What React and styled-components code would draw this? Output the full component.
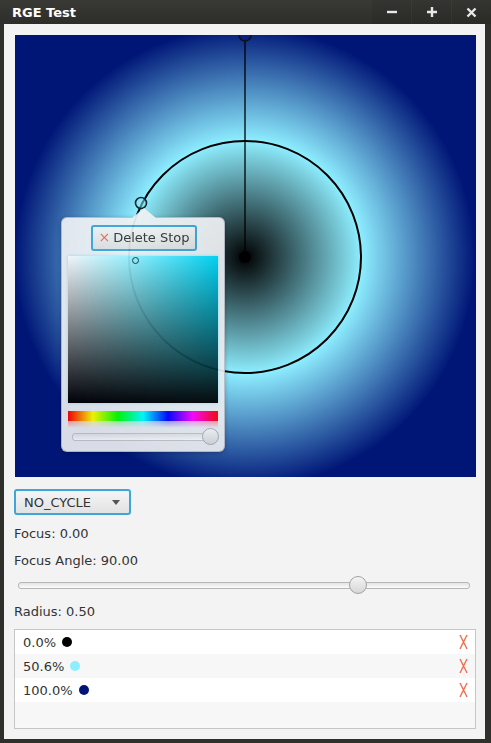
import React from "react";
import styled, { createGlobalStyle } from "styled-components";

const GlobalStyle = createGlobalStyle`
  html, body {
    margin: 0;
    padding: 0;
    background: #2f302c;
  }
  body {
    font-family: "DejaVu Sans", "Liberation Sans", sans-serif;
    font-size: 13px;
    color: #333;
  }
`;

const stops = [
  { pct: "0.0%", color: "#000000" },
  { pct: "50.6%", color: "#8eeeff" },
  { pct: "100.0%", color: "#001677" },
];

export default function App() {
  return (
    <>
      <GlobalStyle />
      <Window>
        <TitleBar>
          <Title>RGE Test</Title>
          <WinButtons>
            <WinButton>
              <svg width="12" height="12" viewBox="0 0 12 12">
                <path d="M1 6h10" stroke="#e8e8e8" strokeWidth="2.4" />
              </svg>
            </WinButton>
            <WinButton>
              <svg width="12" height="12" viewBox="0 0 12 12">
                <path d="M1 6h10M6 1v10" stroke="#e8e8e8" strokeWidth="2.4" />
              </svg>
            </WinButton>
            <WinButton>
              <svg width="11" height="11" viewBox="0 0 11 11">
                <path d="M1.5 1.5l8 8M9.5 1.5l-8 8" stroke="#e8e8e8" strokeWidth="2.4" />
              </svg>
            </WinButton>
          </WinButtons>
        </TitleBar>
        <Content>
          <Canvas>
            <Overlay width="461" height="442" viewBox="0 0 461 442">
              <circle cx="230" cy="222" r="116" fill="none" stroke="#000" strokeWidth="2" />
              <line x1="230" y1="222" x2="230" y2="0" stroke="#000" strokeWidth="1.3" />
              <circle cx="230" cy="0" r="6" fill="#0a2080" stroke="#111" strokeWidth="1.5" />
              <circle cx="230" cy="222" r="6" fill="#000" />
              <circle cx="126" cy="168" r="5.5" fill="rgba(140,230,245,0.55)" stroke="#16262c" strokeWidth="1.6" />
            </Overlay>
            <Popup>
              <Arrow />
              <DeleteButton>
                <Cross>×</Cross>Delete Stop
              </DeleteButton>
              <ColorSquare>
                <Picker />
              </ColorSquare>
              <HueBar />
              <HueReflection />
              <PopSlider>
                <PopTrack />
                <PopThumb />
              </PopSlider>
            </Popup>
          </Canvas>
          <Combo>
            <span>NO_CYCLE</span>
            <ComboArrow />
          </Combo>
          <Label $top={11}>Focus: 0.00</Label>
          <Label $top={11}>Focus Angle: 90.00</Label>
          <Slider>
            <Track />
            <Thumb />
          </Slider>
          <Label $top={10}>Radius: 0.50</Label>
          <StopList>
            {stops.map((s, i) => (
              <Row key={s.pct} $odd={i % 2 === 1}>
                <Pct>{s.pct}</Pct>
                <Dot $color={s.color} />
                <RemoveX width="9" height="16" viewBox="0 0 9 16">
                  <path
                    d="M1 1 Q4.5 8 8 15 M8 1 Q4.5 8 1 15"
                    fill="none"
                    stroke="#f26647"
                    strokeWidth="1.3"
                  />
                </RemoveX>
              </Row>
            ))}
            <Row $odd />
          </StopList>
        </Content>
      </Window>
    </>
  );
}

const Window = styled.div`
  width: 491px;
  height: 743px;
  display: flex;
  flex-direction: column;
  box-sizing: border-box;
  padding: 0 6px 4px 4px;
  background: #2f302c;
`;

const TitleBar = styled.div`
  height: 24px;
  margin: 0 -6px 0 -4px;
  display: flex;
  align-items: center;
  justify-content: space-between;
  background: linear-gradient(#393a35, #2d2e2a);
`;

const Title = styled.div`
  color: #fff;
  font-weight: bold;
  font-size: 13px;
  padding-left: 12px;
  padding-top: 1px;
`;

const WinButtons = styled.div`
  display: flex;
  height: 100%;
  background: rgba(0, 0, 0, 0.06);
`;

const WinButton = styled.div`
  width: 39px;
  height: 100%;
  display: flex;
  align-items: center;
  justify-content: center;
  & + & {
    border-left: 1px solid rgba(255, 255, 255, 0.03);
  }
`;

const Content = styled.div`
  flex: 1;
  background: #f3f3f3;
  display: flex;
  flex-direction: column;
  align-items: flex-start;
  padding: 11px 9px 0 10px;
`;

const Canvas = styled.div`
  position: relative;
  width: 461px;
  height: 442px;
  margin-left: 1px;
  background: radial-gradient(
    circle 230px at 230px 222px,
    #000000 0%,
    #8eeeff 50.6%,
    #001677 100%
  );
`;

const Overlay = styled.svg`
  position: absolute;
  left: 0;
  top: 0;
`;

const Popup = styled.div`
  position: absolute;
  left: 46px;
  top: 182px;
  width: 164px;
  height: 235px;
  box-sizing: border-box;
  padding: 7px;
  display: flex;
  flex-direction: column;
  align-items: center;
  border-radius: 6px;
  background: linear-gradient(#eff1f4, #e9ebef);
  border: 1px solid rgba(180, 186, 196, 0.9);
  box-shadow: 0 1px 4px rgba(0, 0, 0, 0.3);
  opacity: 0.93;
`;

const Arrow = styled.div`
  position: absolute;
  left: 70px;
  top: -10px;
  width: 0;
  height: 0;
  border-left: 12px solid transparent;
  border-right: 12px solid transparent;
  border-bottom: 10px solid #eff1f4;
`;

const DeleteButton = styled.div`
  width: 106px;
  height: 26px;
  box-sizing: border-box;
  margin-left: 2px;
  display: flex;
  align-items: center;
  justify-content: center;
  gap: 3px;
  border: 2px solid #3ea7d9;
  border-radius: 3px;
  background: linear-gradient(#f4f4f4, #e1e1e1);
  color: #333;
  font-size: 13px;
`;

const Cross = styled.span`
  color: #f06a50;
  font-size: 14px;
  line-height: 1;
  margin-top: -1px;
`;

const ColorSquare = styled.div`
  position: relative;
  margin-top: 5px;
  width: 150px;
  height: 150px;
  background: linear-gradient(to top, #000, rgba(0, 0, 0, 0)),
    linear-gradient(to right, #fff, hsl(188, 100%, 50%));
  box-shadow: 0 0 3px rgba(80, 220, 255, 0.6);
`;

const Picker = styled.div`
  position: absolute;
  left: 64px;
  top: 1px;
  width: 5px;
  height: 5px;
  border-radius: 50%;
  border: 1.5px solid #203038;
`;

const hue =
  "linear-gradient(to right, #ff0000, #ffff00 16.6%, #00ff00 33.3%, #00ffff 50%, #0000ff 66.6%, #ff00ff 83.3%, #ff0000)";

const HueBar = styled.div`
  margin-top: 8px;
  width: 150px;
  height: 10px;
  background: ${hue};
`;

const HueReflection = styled.div`
  width: 150px;
  height: 7px;
  background: ${hue};
  opacity: 0.35;
  -webkit-mask-image: linear-gradient(#000, transparent);
  mask-image: linear-gradient(#000, transparent);
`;

const PopSlider = styled.div`
  position: relative;
  width: 146px;
  height: 16px;
  margin-top: 0;
`;

const PopTrack = styled.div`
  position: absolute;
  left: 2px;
  right: 2px;
  top: 5px;
  height: 6px;
  border-radius: 3px;
  border: 1px solid #c4c6c9;
  background: linear-gradient(#e2e3e5, #fafafa);
`;

const PopThumb = styled.div`
  position: absolute;
  left: 132px;
  top: 0;
  width: 15px;
  height: 15px;
  border-radius: 50%;
  border: 1px solid #a9abae;
  background: linear-gradient(#f6f6f6, #d7d8da);
`;

const Combo = styled.div`
  margin-top: 12px;
  width: 117px;
  height: 26px;
  box-sizing: border-box;
  display: flex;
  align-items: center;
  justify-content: space-between;
  padding: 0 8px 0 8px;
  border: 2px solid #3ea7d9;
  border-radius: 3px;
  background: linear-gradient(#f5f5f5, #e2e2e2);
  color: #333;
`;

const ComboArrow = styled.div`
  width: 0;
  height: 0;
  border-left: 4px solid transparent;
  border-right: 4px solid transparent;
  border-top: 5px solid #555;
  margin-right: 1px;
`;

const Label = styled.div`
  margin-top: ${(p) => p.$top}px;
  line-height: 16px;
  color: #333;
`;

const Slider = styled.div`
  position: relative;
  margin-top: 7px;
  margin-left: 4px;
  width: 452px;
  height: 18px;
`;

const Track = styled.div`
  position: absolute;
  left: 0;
  right: 0;
  top: 6px;
  height: 5px;
  border-radius: 3px;
  border: 1px solid #b6b6b6;
  background: linear-gradient(#e4e4e4, #fbfbfb);
`;

const Thumb = styled.div`
  position: absolute;
  left: 331px;
  top: 0;
  width: 16px;
  height: 16px;
  border-radius: 50%;
  border: 1px solid #a3a3a3;
  background: linear-gradient(#f4f4f4, #d6d6d6);
`;

const StopList = styled.div`
  margin-top: 9px;
  width: 462px;
  height: 100px;
  box-sizing: border-box;
  border: 1px solid #c6c6c6;
  background: #f8f8f8;
`;

const Row = styled.div`
  height: 24px;
  display: flex;
  align-items: center;
  padding: 0 7px 0 8px;
  background: ${(p) => (p.$odd ? "#f7f7f7" : "#ffffff")};
`;

const Pct = styled.span`
  color: #333;
`;

const Dot = styled.span`
  width: 10px;
  height: 10px;
  border-radius: 50%;
  margin-left: 6px;
  background: ${(p) => p.$color};
`;

const RemoveX = styled.svg`
  margin-left: auto;
`;
